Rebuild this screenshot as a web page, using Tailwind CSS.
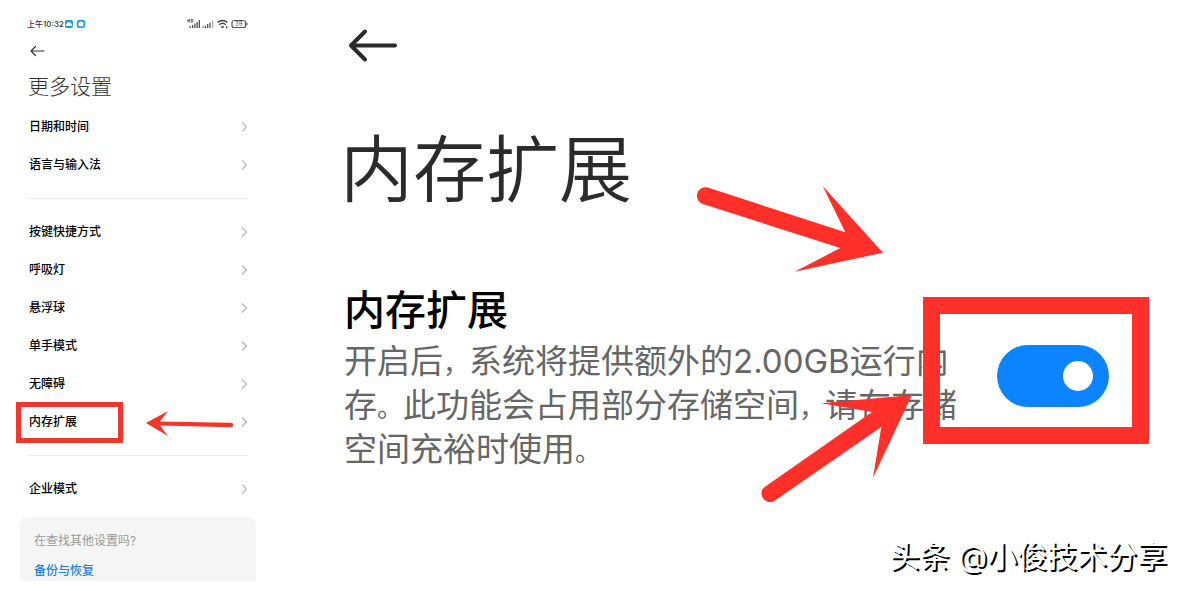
<!DOCTYPE html>
<html lang="zh-CN">
<head>
    <meta charset="UTF-8">
    <meta name="viewport" content="width=device-width, initial-scale=1.0">
    <title>内存扩展</title>
    <script src="https://cdn.jsdelivr.net/npm/@tailwindcss/browser@4"></script>
</head>
<body class="relative min-h-screen overflow-hidden bg-white font-['Inter','Noto_Sans_CJK_SC',sans-serif] text-black">
    <div class="flex">
        <!-- Settings list -->
        <aside class="flex w-[264px] shrink-0 flex-col pt-4">
            <div class="flex h-4 items-center pl-[27px] pr-4 text-[8px] text-[#333]">
                <span class="font-medium">上午10:32</span>
                <svg class="ml-px" width="21" height="10" viewBox="0 0 21 10">
                    <rect x="0" y="1" width="8" height="8" rx="2" fill="#159bee"/>
                    <path d="M2 7a1.3 1.3 0 0 1 0-2.6 2 2 0 0 1 3.8 0A1.3 1.3 0 0 1 6 7z" fill="#fff"/>
                    <rect x="12" y="1" width="8" height="8" rx="2" fill="#159bee"/>
                    <circle cx="16" cy="5" r="2.6" fill="#fff"/>
                </svg>
                <svg class="ml-auto" width="61" height="12" viewBox="0 0 61 12" fill="#555">
                    <path d="M.5 1h.8v1h.8V1h.8v3.500h-.8V3h-.8v1.500H.5zM3.800 1h1.800l.8.8v1.900l-.8.8H3.800zM4.600 1.800v1.900h.9V1.800z"/>
                    <path d="M2.500 8h1.300v2H2.500zM5 7h1.300v3H5zM7.300 5.500h1.300V10H7.300zM9.500 4h1.300v6H9.500zM11.700 2H13v8h-1.300z"/>
                    <path d="M15.500 8.500h1.300V10h-1.300zM17.700 7.500H19V10h-1.300zM20 6h1.300v4H20zM22.300 4.500h1.300V10h-1.300z"/>
                    <path d="M25 2.500h1.200V10H25z" fill="#aaa"/>
                    <g fill="none" stroke="#444" stroke-width="1.500">
                        <path d="M30.500 4.500q5-4 10 0M32.200 6.700q3.300-2.800 6.600 0"/>
                        <rect x="45" y="2.500" width="13.500" height="7" rx="2" stroke="#555" stroke-width="1.200"/>
                    </g>
                    <circle cx="35.500" cy="9" r="1.300"/>
                    <path d="M39 8h1.200v2.500H39zM59.300 4.700h1.200v2.600h-1.200z"/>
                    <text x="51.800" y="8.200" font-size="6" text-anchor="middle">39</text>
                </svg>
            </div>

            <button type="button" aria-label="返回" class="ml-[30px] mt-[11px] flex h-4 w-4 items-center">
                <svg width="15" height="12" viewBox="0 0 15 12" fill="none" stroke="#333" stroke-width="1.200" stroke-linecap="round" stroke-linejoin="round">
                    <path d="M5.500 1.500 1 6l4.500 4.500M1 6h13"/>
                </svg>
            </button>

            <h1 class="mt-3 pl-7 text-[21px] leading-8 font-light text-[#333]">更多设置</h1>

            <ul class="mt-[5px] pl-[29px] pr-4 text-xs font-medium">
                <li><a href="#" class="flex h-[38px] items-center justify-between">日期和时间<svg width="8" height="10" viewBox="0 0 8 10" fill="none" stroke="#b5b5b5" stroke-width="1.100"><path d="m2 .5 4.500 4.500L2 9.500"/></svg></a></li>
                <li><a href="#" class="flex h-[38px] items-center justify-between">语言与输入法<svg width="8" height="10" viewBox="0 0 8 10" fill="none" stroke="#b5b5b5" stroke-width="1.100"><path d="m2 .5 4.500 4.500L2 9.500"/></svg></a></li>
            </ul>
            <hr class="ml-7 mr-4 my-[14px] border-[#ececec]">
            <ul class="pl-[29px] pr-4 text-xs font-medium">
                <li><a href="#" class="flex h-[38px] items-center justify-between">按键快捷方式<svg width="8" height="10" viewBox="0 0 8 10" fill="none" stroke="#b5b5b5" stroke-width="1.100"><path d="m2 .5 4.500 4.500L2 9.500"/></svg></a></li>
                <li><a href="#" class="flex h-[38px] items-center justify-between">呼吸灯<svg width="8" height="10" viewBox="0 0 8 10" fill="none" stroke="#b5b5b5" stroke-width="1.100"><path d="m2 .5 4.500 4.500L2 9.500"/></svg></a></li>
                <li><a href="#" class="flex h-[38px] items-center justify-between">悬浮球<svg width="8" height="10" viewBox="0 0 8 10" fill="none" stroke="#b5b5b5" stroke-width="1.100"><path d="m2 .5 4.500 4.500L2 9.500"/></svg></a></li>
                <li><a href="#" class="flex h-[38px] items-center justify-between">单手模式<svg width="8" height="10" viewBox="0 0 8 10" fill="none" stroke="#b5b5b5" stroke-width="1.100"><path d="m2 .5 4.500 4.500L2 9.500"/></svg></a></li>
                <li><a href="#" class="flex h-[38px] items-center justify-between">无障碍<svg width="8" height="10" viewBox="0 0 8 10" fill="none" stroke="#b5b5b5" stroke-width="1.100"><path d="m2 .5 4.500 4.500L2 9.500"/></svg></a></li>
                <li><a href="#" class="flex h-[38px] items-center justify-between">内存扩展<svg width="8" height="10" viewBox="0 0 8 10" fill="none" stroke="#b5b5b5" stroke-width="1.100"><path d="m2 .5 4.500 4.500L2 9.500"/></svg></a></li>
            </ul>
            <hr class="ml-7 mr-4 my-[14px] border-[#ececec]">
            <ul class="pl-[29px] pr-4 text-xs font-medium">
                <li><a href="#" class="flex h-[38px] items-center justify-between">企业模式<svg width="8" height="10" viewBox="0 0 8 10" fill="none" stroke="#b5b5b5" stroke-width="1.100"><path d="m2 .5 4.500 4.500L2 9.500"/></svg></a></li>
            </ul>

            <div class="ml-5 mr-2 mt-[9px] rounded-t-lg bg-[#f5f5f5] pl-[14px] pt-[14px] text-xs">
                <p class="leading-5 text-[#999]">在查找其他设置吗?</p>
                <a href="#" class="mt-[10px] block h-5 leading-5 font-medium text-[#1f80e6]">备份与恢复</a>
            </div>
        </aside>

        <!-- Memory extension detail -->
        <main class="flex min-w-0 flex-1 flex-col pl-[76px] pr-[77px] pt-7">
            <button type="button" aria-label="返回" class="ml-2 h-9 w-[52px]">
                <svg width="52" height="36" viewBox="0 0 52 36" fill="none" stroke="#2b2b2b" stroke-width="4" stroke-linecap="round" stroke-linejoin="round">
                    <path d="M17 3.500 3 17.500l14 14M3 17.500h44"/>
                </svg>
            </button>
            <h2 class="mt-[58px] text-[73px] leading-[96px] font-[350] text-[#2b2b2b]">内存扩展</h2>
            <div class="mt-[63px] flex items-center justify-between pl-1">
                <label for="memory-switch" class="whitespace-nowrap">
                    <span class="block text-[41px] leading-[58px] font-medium">内存扩展</span>
                    <span class="block text-[33px] leading-[44px] text-[#666]">开启后<span class="text-[26px] leading-none">，</span>系统将提供额外的2.00GB运行内<br>存<span class="text-[26px] leading-none">。</span>此功能会占用部分存储空间<span class="text-[26px] leading-none">，</span>请在存储<br>空间充裕时使用<span class="text-[26px] leading-none">。</span></span>
                </label>
                <div class="relative flex shrink-0">
                    <input id="memory-switch" type="checkbox" role="switch" checked class="flex h-[62px] w-28 appearance-none items-center justify-end rounded-full bg-[#0d84ff] pr-4 before:h-[30px] before:w-[30px] before:rounded-full before:bg-white before:content-['']">
                    <span class="pointer-events-none absolute -top-12 -right-10 h-[147px] w-[226px] border-[17px] border-[#ff3029]"></span>
                </div>
            </div>
        </main>
    </div>

    <!-- Annotations drawn over the screens -->
    <svg class="pointer-events-none absolute left-0 top-0" width="1186" height="591" viewBox="0 0 1186 591" fill="#ff3029">
        <rect x="18.500" y="404.500" width="102" height="36" fill="none" stroke="#f4352c" stroke-width="5"/>
        <path fill="#f4352c" d="M146 423 168 411 160 421.500 231 422.700A2.200 2.200 0 0 1 231 427.200L160 425.500 168 436z"/>
        <path d="M707 187.300 845.300 232.300 822.700 186 883 252.700 794.700 271.700 840.300 248 702 203.800A8.700 8.700 0 0 1 707 187.300z"/>
        <path d="M765 486.700 872 412 821.300 403.300 912 395 873 477.700 881.300 427 775 500.500A8.500 8.500 0 0 1 765 486.700z"/>
    </svg>
    <p class="absolute right-[19px] bottom-[15px] text-[30px] leading-10 whitespace-nowrap text-white [text-shadow:2px_2px_0_#000]">头条 @小俊技术分享</p>
</body>
</html>
